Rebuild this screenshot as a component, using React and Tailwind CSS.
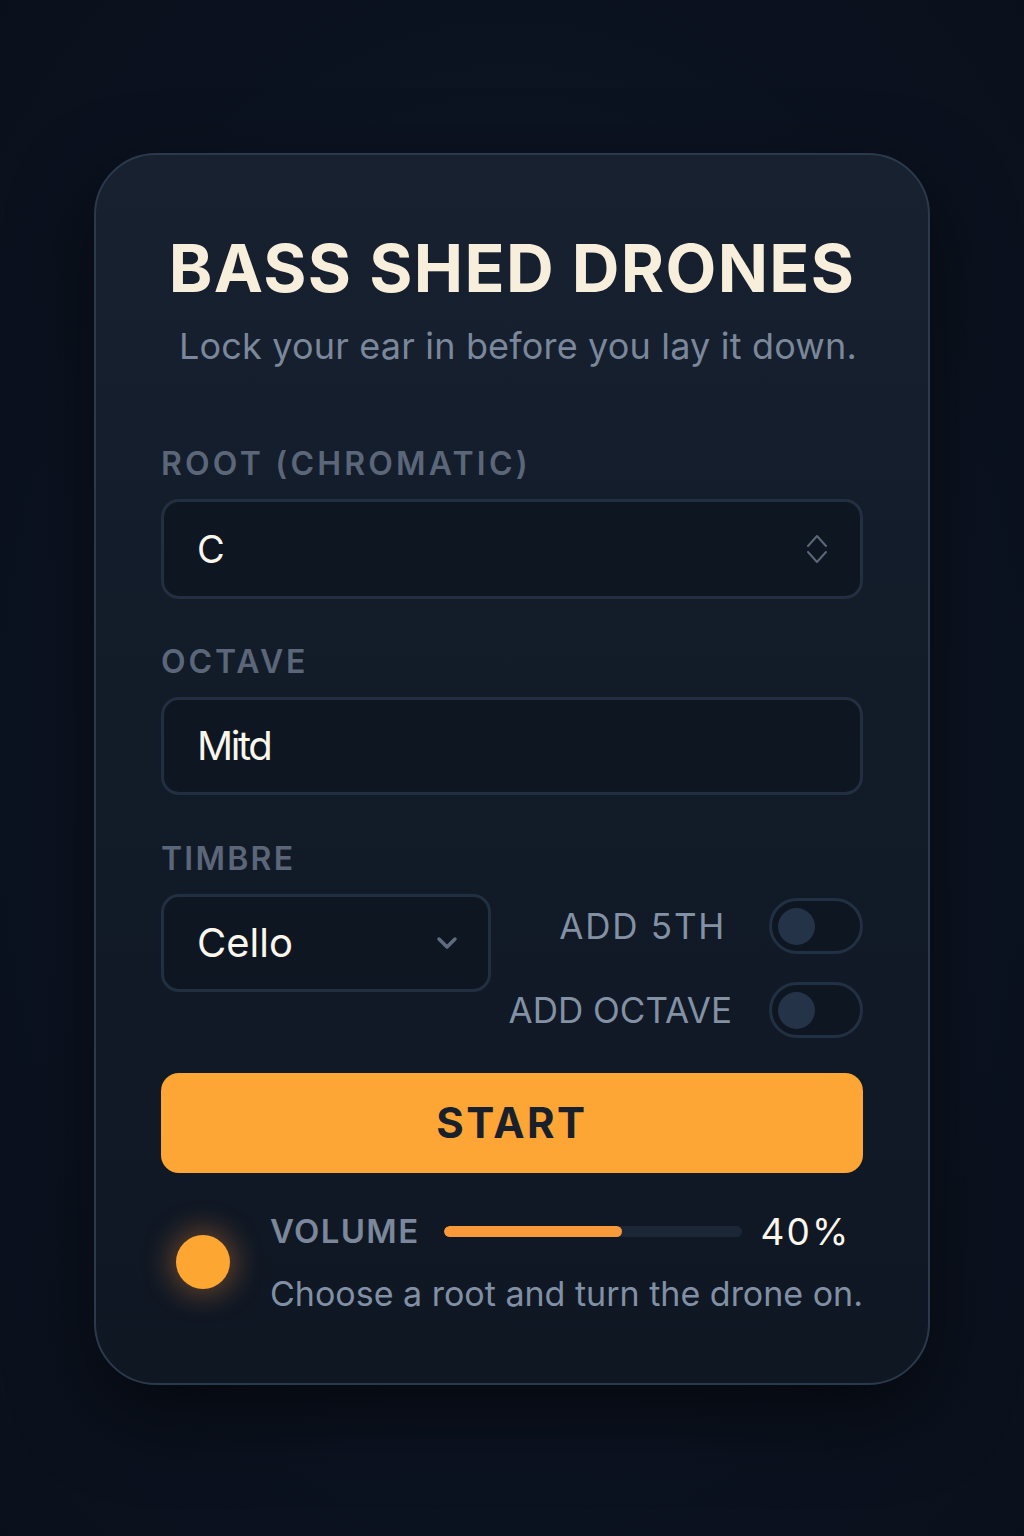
import React from "react";

function Toggle() {
  return (
    <div className="w-[94px] h-[56px] rounded-full border-[3px] border-[#223043] bg-[#0e1622] flex items-center pl-[6px]">
      <div className="w-[37px] h-[37px] rounded-full bg-[#243347]" />
    </div>
  );
}

export default function App() {
  const font = { fontFamily: "Inter, 'Noto Sans', sans-serif" };
  return (
    <div
      className="w-[1024px] h-[1536px] bg-[radial-gradient(ellipse_at_center,#101927_0%,#0c1321_60%,#0a101b_100%)] pt-[153px]"
      style={font}
    >
      <div className="mx-auto w-[836px] rounded-[62px] border-2 border-[#2a394c] bg-[linear-gradient(180deg,#172130_0%,#121b28_45%,#0f1723_100%)] shadow-[0_30px_80px_rgba(0,0,0,0.55)] px-[65px] pt-[80px] pb-[72px] flex flex-col">
        <h1 className="text-center text-[66px] leading-none font-bold text-[#f8eedc] tracking-[0.02em]">
          BASS SHED DRONES
        </h1>
        <p className="mt-[27px] pl-[12px] text-center text-[36px] leading-none text-[#7b879a] tracking-[0.005em]">
          Lock your ear in before you lay it down.
        </p>

        <div className="mt-[84px] text-[32px] leading-none font-semibold tracking-[0.1em] text-[#5b6779]">
          ROOT (CHROMATIC)
        </div>
        <div className="mt-[19px] h-[100px] rounded-[18px] border-[3px] border-[#222f41] bg-[#0e1622] flex items-center justify-between pl-[33px] pr-[32px]">
          <span className="text-[38px] leading-none text-[#fbf6ec]">C</span>
          <svg width="22" height="32" viewBox="0 0 22 32" fill="none" stroke="#5b6779" strokeWidth="2" strokeLinecap="round" strokeLinejoin="round">
            <path d="M2 13 L11 3 L20 13" />
            <path d="M2 19 L11 29 L20 19" />
          </svg>
        </div>

        <div className="mt-[47px] text-[32px] leading-none font-semibold tracking-[0.09em] text-[#5b6779]">
          OCTAVE
        </div>
        <div className="mt-[19px] h-[98px] rounded-[18px] border-[3px] border-[#222f41] bg-[#0e1622] flex items-center pl-[33px]">
          <span className="text-[40px] leading-none text-[#fbf6ec] tracking-[-0.06em]">Mitd</span>
        </div>

        <div className="mt-[48px] text-[32px] leading-none font-semibold tracking-[0.07em] text-[#5b6779]">
          TIMBRE
        </div>
        <div className="mt-[19px] flex items-start justify-between">
          <div className="w-[330px] h-[98px] rounded-[18px] border-[3px] border-[#222f41] bg-[#0e1622] flex items-center justify-between pl-[33px] pr-[30px]">
            <span className="text-[40px] leading-none text-[#fbf6ec]">Cello</span>
            <svg width="22" height="14" viewBox="0 0 22 14" fill="none" stroke="#5f6c80" strokeWidth="3.5" strokeLinecap="round" strokeLinejoin="round">
              <path d="M3 3 L11 11 L19 3" />
            </svg>
          </div>
          <div className="mt-[4px] flex flex-col items-end gap-[28px]">
            <div className="flex items-center gap-[43px]">
              <span className="text-[35px] leading-none tracking-[0.05em] text-[#8391a5]">ADD 5TH</span>
              <Toggle />
            </div>
            <div className="flex items-center gap-[37px]">
              <span className="text-[35px] leading-none tracking-[0em] text-[#8391a5]">ADD OCTAVE</span>
              <Toggle />
            </div>
          </div>
        </div>

        <button className="mt-[35px] h-[100px] rounded-[18px] bg-[#fda636] flex items-center justify-center">
          <span className="text-[42px] leading-none font-bold tracking-[0.06em] text-[#18202c]">START</span>
        </button>

        <div className="mt-[40px] flex items-center">
          <div className="w-[111px] flex items-center">
            <div className="ml-[15px] w-[54px] h-[54px] rounded-full bg-[#fda632] shadow-[0_0_28px_6px_rgba(251,146,60,0.35)]" />
          </div>
          <div className="flex-1 flex flex-col">
            <div className="flex items-center">
              <span className="text-[33px] leading-none font-semibold tracking-[0.04em] text-[#7b879a]">VOLUME</span>
              <div className="ml-[25px] w-[298px] h-[11px] rounded-full bg-[#1b2636] overflow-hidden">
                <div className="h-full w-[178px] rounded-full bg-[#f99a3a]" />
              </div>
              <span className="ml-[18px] text-[37px] leading-none text-[#fbf6ec] tracking-[0.06em]">40%</span>
            </div>
            <p className="mt-[27px] text-[34px] leading-none text-[#8190a4] whitespace-nowrap">
              Choose a root and turn the drone on.
            </p>
          </div>
        </div>
      </div>
    </div>
  );
}
